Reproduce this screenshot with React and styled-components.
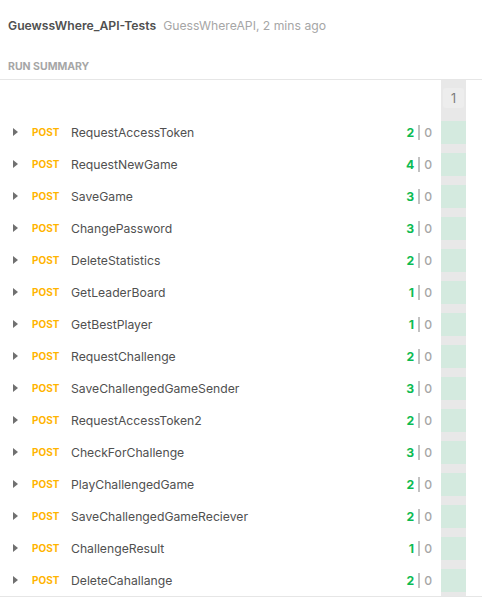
import React from 'react'
import styled, { createGlobalStyle } from 'styled-components';

const GlobalStyle = createGlobalStyle`
body {
  margin: 0;
  background: #ffffff;
  font-family: Inter, "Noto Sans", sans-serif;
}
`;

const Page = styled.div`
width: 482px;
height: 606px;
background: #ffffff;
overflow: hidden;
`;

const Header = styled.div`
display: flex;
align-items: baseline;
padding: 18px 8px 0 8px;
height: 17px;
`;

const Title = styled.span`
font-size: 12.2px;
font-weight: 600;
color: #505050;
margin-right: 7px;
`;

const Meta = styled.span`
font-size: 12.2px;
color: #a6a6a6;
`;

const Summary = styled.div`
padding: 0 8px 6px 8px;
height: 45px;
display: flex;
align-items: flex-end;
font-size: 10.5px;
font-weight: 700;
color: #a6a6a6;
border-bottom: 1px solid #e6e6e6;
box-sizing: border-box;
`;

const Row = styled.div`
display: flex;
align-items: center;
height: ${p => p.$height}px;
`;

const Main = styled.div`
flex: 1;
display: flex;
align-items: center;
height: 100%;
`;

const Caret = styled.span`
width: 0;
height: 0;
border-top: 4px solid transparent;
border-bottom: 4px solid transparent;
border-left: 5px solid #707070;
margin-left: 13px;
margin-right: 14px;
`;

const Method = styled.span`
font-size: 10px;
font-weight: 700;
color: #ffb400;
width: 39px;
`;

const Name = styled.span`
font-size: 12.2px;
color: #505050;
`;

const Counts = styled.div`
display: flex;
align-items: center;
font-size: 12.2px;
margin-right: 9px;
`;

const Passed = styled.span`
color: #0cbb52;
font-weight: 700;
`;

const Sep = styled.span`
width: 2px;
height: 15px;
background: #c2c2c2;
margin: 0 4px 0 4px;
`;

const Failed = styled.span`
color: #a6a6a6;
font-weight: 500;
`;

const Column = styled.div`
width: 25px;
height: 100%;
background: #e8e8e8;
display: flex;
align-items: center;
justify-content: center;
margin-right: 16px;
`;

const IterLabel = styled.div`
width: 21px;
height: 20px;
background: #ededed;
border-radius: 3px;
color: #7a7a7a;
font-size: 12.5px;
display: flex;
align-items: center;
justify-content: center;
`;

const PassCell = styled.div`
width: 25px;
height: 23px;
background: #d4eadf;
`;

const Bottom = styled.div`
border-top: 1px solid #e6e6e6;
`;

const requests = [
  ['RequestAccessToken', 2],
  ['RequestNewGame', 4],
  ['SaveGame', 3],
  ['ChangePassword', 3],
  ['DeleteStatistics', 2],
  ['GetLeaderBoard', 1],
  ['GetBestPlayer', 1],
  ['RequestChallenge', 2],
  ['SaveChallengedGameSender', 3],
  ['RequestAccessToken2', 2],
  ['CheckForChallenge', 3],
  ['PlayChallengedGame', 2],
  ['SaveChallengedGameReciever', 2],
  ['ChallengeResult', 1],
  ['DeleteCahallange', 2],
];

const App = () => {
  return (
    <Page>
      <GlobalStyle />
      <Header>
        <Title>GuewssWhere_API-Tests</Title>
        <Meta>GuessWhereAPI, 2 mins ago</Meta>
      </Header>
      <Summary>RUN SUMMARY</Summary>
      <Row $height={36}>
        <Main />
        <Column>
          <IterLabel>1</IterLabel>
        </Column>
      </Row>
      {requests.map(([name, passed]) => (
        <Row $height={32} key={name}>
          <Main>
            <Caret />
            <Method>POST</Method>
            <Name>{name}</Name>
          </Main>
          <Counts>
            <Passed>{passed}</Passed>
            <Sep />
            <Failed>0</Failed>
          </Counts>
          <Column>
            <PassCell />
          </Column>
        </Row>
      ))}
      <Bottom />
    </Page>
  )
}

export default App
